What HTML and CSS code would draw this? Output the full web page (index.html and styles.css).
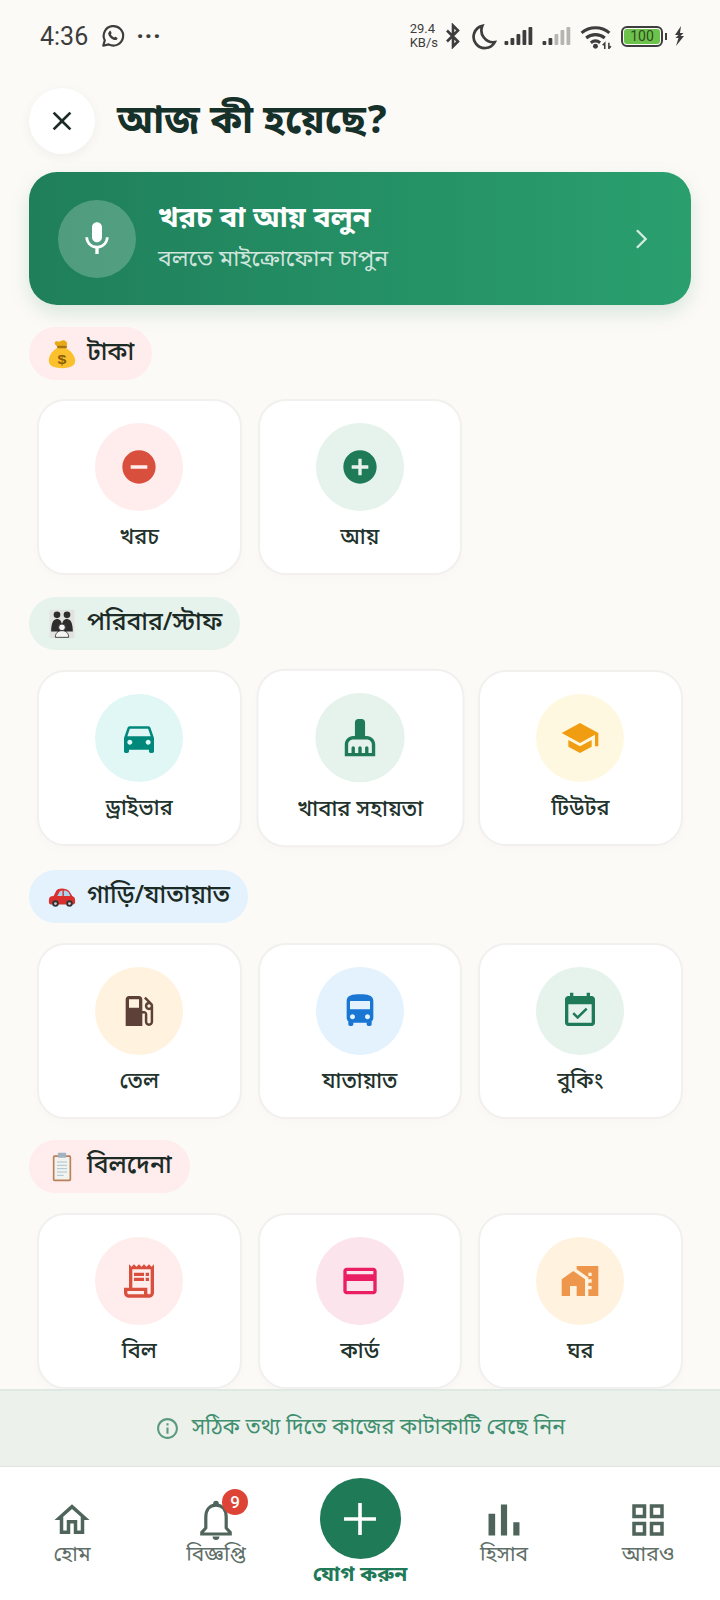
FILE: index.html
```html
<!DOCTYPE html>
<html lang="bn">
  <head>
    <meta charset="utf-8">
    <title>আজ কী হয়েছে?</title>
    <link rel="stylesheet" href="styles.css">
  </head>
  <body>
    <div class="screen">
      <div class="status-bar">
        <div class="status-left">
          <span class="clock">4:36</span>
          <svg class="wa-icon" viewBox="0 0 24 24"><path d="M3 21l1.4-5A9 9 0 1 1 8 19.7z" fill="none" stroke="#3d3d3d" stroke-width="2" stroke-linejoin="round"/><path d="M8.6 7.4c.5-.5 1.2-.4 1.4.2l.6 1.4c.1.4 0 .7-.6 1.4.6 1.3 1.6 2.300 3 3 .6-.7.9-.9 1.300-.7l1.500.8c.5.3.5.9.1 1.400-.8.9-2 1.100-3.500.5-2.400-1-4-2.700-4.700-4.800-.3-1.100 0-2 .9-2.600z" fill="#3d3d3d"/></svg>
          <span class="dots">···</span>
        </div>
        <div class="status-right">
          <span class="netspeed">29.4<br>KB/s</span>
          <svg class="bt-icon" viewBox="0 0 16 26"><path d="M2 7.500L13 18.500 8 23.500V2.500L13 7.500 2 18.500" fill="none" stroke="#3d3d3d" stroke-width="2.600"/></svg>
          <svg class="moon-icon" viewBox="0 0 24 24"><path d="M11 2.500A10 10 0 1 0 22 17 10.500 10.500 0 0 1 11 2.500z" fill="none" stroke="#3d3d3d" stroke-width="2.400"/></svg>
          <svg class="signal-icon" viewBox="0 0 30 20"><g fill="#3d3d3d"><rect x="0" y="15" width="3.800" height="4" rx="1"/><rect x="6" y="12" width="3.800" height="7" rx="1"/><rect x="12" y="8" width="3.800" height="11" rx="1"/><rect x="18" y="4" width="3.800" height="15" rx="1"/><rect x="24" y="1" width="3.800" height="18" rx="1"/></g></svg>
          <svg class="signal-icon" viewBox="0 0 30 20"><g fill="#3d3d3d"><rect x="0" y="15" width="3.800" height="4" rx="1"/><rect x="6" y="12" width="3.800" height="7" rx="1"/></g><g fill="#b5b5b2"><rect x="12" y="8" width="3.800" height="11" rx="1"/><rect x="18" y="4" width="3.800" height="15" rx="1"/><rect x="24" y="1" width="3.800" height="18" rx="1"/></g></svg>
          <svg class="wifi-icon" viewBox="0 0 32 24"><g fill="none" stroke="#3d3d3d" stroke-width="3"><path d="M1.500 8.500a21 21 0 0 1 27 0"/><path d="M6 13.500a14 14 0 0 1 18 0"/><path d="M10.500 18a7.500 7.500 0 0 1 9 0"/></g><circle cx="15" cy="21.500" r="2.400" fill="#3d3d3d"/><path d="M24 24v-5.500l-2 2M28 18v5.500l2-2" fill="none" stroke="#3d3d3d" stroke-width="1.500"/></svg>
          <div class="battery"><span class="battery-fill">100</span></div>
          <span class="battery-tip"></span>
          <svg class="bolt-icon" viewBox="0 0 12 22"><path d="M8 1L2 10l3.500 0-3 3 3 0L3 21l8-10-3.500 0 3-3-3.500 0z" fill="#3d3d3d"/></svg>
        </div>
      </div>

      <div class="scroll-area">
        <div class="top-row">
          <div class="close-btn">
            <svg viewBox="0 0 24 24"><path d="M19 6.410L17.590 5 12 10.590 6.410 5 5 6.410 10.590 12 5 17.590 6.410 19 12 13.410 17.590 19 19 17.590 13.410 12z"/></svg>
          </div>
          <h1 class="page-title">আজ কী হয়েছে?</h1>
        </div>

        <div class="voice-banner">
          <div class="mic-circle">
            <svg viewBox="0 0 24 24"><path d="M12 14c1.660 0 2.990-1.340 2.990-3L15 5c0-1.660-1.340-3-3-3S9 3.340 9 5v6c0 1.660 1.340 3 3 3zm5.300-3c0 3-2.540 5.100-5.300 5.100S6.700 14 6.700 11H5c0 3.410 2.720 6.230 6 6.720V21h2v-3.280c3.280-.48 6-3.300 6-6.720h-1.700z"/></svg>
          </div>
          <div class="voice-text">
            <div class="voice-title">খরচ বা আয় বলুন</div>
            <div class="voice-sub">বলতে মাইক্রোফোন চাপুন</div>
          </div>
          <svg class="voice-chevron" viewBox="0 0 24 24"><path d="M8.500 4.500L16 12l-7.500 7.500"/></svg>
        </div>

        <section class="group group-first">
          <div class="pill pill-rose">
            <svg class="emoji" viewBox="2 0 28 36" preserveAspectRatio="none"><path d="M11 9C7 5 9 2 12 3c2 1 4-3 7-1s2 4 2 6z" fill="#e8a917"/><path d="M12 10C5 15 2 22 3 28c1 5 6 7 13 7s12-2 13-7c1-6-3-13-10-18z" fill="#fbc02d"/><rect x="11" y="8" width="10" height="3" rx="1.500" fill="#a8740f"/><text x="16" y="30" class="emoji-dollar">$</text></svg>
            <span>টাকা</span>
          </div>
          <div class="card-row">
            <div class="card">
              <div class="icon-circle bg-rose"><svg class="ic-red" viewBox="0 0 24 24"><path d="M12 2C6.480 2 2 6.480 2 12s4.480 10 10 10 10-4.480 10-10S17.520 2 12 2zm5 11H7v-2h10v2z"/></svg></div>
              <div class="card-label">খরচ</div>
            </div>
            <div class="card">
              <div class="icon-circle bg-mint"><svg class="ic-green" viewBox="0 0 24 24"><path d="M12 2C6.480 2 2 6.480 2 12s4.480 10 10 10 10-4.480 10-10S17.520 2 12 2zm5 11h-4v4h-2v-4H7v-2h4V7h2v4h4v2z"/></svg></div>
              <div class="card-label">আয়</div>
            </div>
          </div>
        </section>

        <section class="group group-tall">
          <div class="pill pill-mint">
            <svg class="emoji" viewBox="0 0 32 36"><rect x="1" y="1" width="30" height="34" rx="2" fill="#e2e2e0"/><circle cx="10" cy="7" r="4" fill="#2d2d2d"/><circle cx="22" cy="7" r="4" fill="#2d2d2d"/><path d="M3 27c0-11 3-15 7-15s5 3 6 6c1-3 2-6 6-6s7 4 7 15z" fill="#2d2d2d"/><circle cx="16" cy="22" r="4" fill="#f4f4f4" stroke="#2d2d2d"/><path d="M8 34c0-5 3-8 8-8s8 3 8 8z" fill="#f4f4f4" stroke="#2d2d2d"/></svg>
            <span>পরিবার/স্টাফ</span>
          </div>
          <div class="card-row">
            <div class="card">
              <div class="icon-circle bg-teal"><svg class="ic-teal" viewBox="0 0 24 24"><path d="M18.920 6.010C18.720 5.420 18.160 5 17.500 5h-11c-.66 0-1.210.42-1.420 1.010L3 12v8c0 .55.45 1 1 1h1c.55 0 1-.45 1-1v-1h12v1c0 .55.45 1 1 1h1c.55 0 1-.45 1-1v-8l-2.080-5.990zM6.500 16c-.83 0-1.500-.67-1.500-1.500S5.670 13 6.500 13s1.500.67 1.500 1.500S7.330 16 6.500 16zm11 0c-.83 0-1.500-.67-1.500-1.500s.67-1.500 1.500-1.500 1.500.67 1.500 1.500-.67 1.500-1.500 1.500zM5 11l1.500-4.500h11L19 11H5z"/></svg></div>
              <div class="card-label">ড্রাইভার</div>
            </div>
            <div class="card card-raised">
              <div class="icon-circle bg-mint"><svg class="ic-green" viewBox="0 0 24 24"><path d="M16 11h-1V3c0-1.100-.9-2-2-2h-2c-1.100 0-2 .9-2 2v8H8c-2.760 0-5 2.240-5 5v7h18v-7c0-2.760-2.240-5-5-5zm3 10h-2v-3c0-.55-.45-1-1-1s-1 .45-1 1v3h-2v-3c0-.55-.45-1-1-1s-1 .45-1 1v3H9v-3c0-.55-.45-1-1-1s-1 .45-1 1v3H5v-5c0-1.650 1.350-3 3-3h8c1.650 0 3 1.350 3 3v5z"/></svg></div>
              <div class="card-label">খাবার সহায়তা</div>
            </div>
            <div class="card">
              <div class="icon-circle bg-cream"><svg class="ic-amber" viewBox="0 0 24 24"><path d="M5 13.180v4L12 21l7-3.820v-4L12 17l-7-3.820zM12 3L1 9l11 6 9-4.910V17h2V9L12 3z"/></svg></div>
              <div class="card-label">টিউটর</div>
            </div>
          </div>
        </section>

        <section class="group">
          <div class="pill pill-blue">
            <svg class="emoji" viewBox="1 0 30 24"><path d="M2 15c0-3 2-4 5-4l3-6c1-1 3-2 6-2s6 1 8 3l3 5c2 1 3 2 3 4v3c0 1-1 2-2 2H4c-1 0-2-1-2-2z" fill="#d9302e"/><path d="M11 11l2.500-5c1-.8 2-1 3-1v6zM18 5c2 0 4 .5 5 2l2 4h-7z" fill="#a9d4ee"/><circle cx="9" cy="19" r="3.500" fill="#333"/><circle cx="24" cy="19" r="3.500" fill="#333"/><circle cx="9" cy="19" r="1.500" fill="#ccc"/><circle cx="24" cy="19" r="1.500" fill="#ccc"/></svg>
            <span>গাড়ি/যাতায়াত</span>
          </div>
          <div class="card-row">
            <div class="card">
              <div class="icon-circle bg-peach"><svg class="ic-brown" viewBox="0 0 24 24"><path d="M19.770 7.230l.01-.01-3.720-3.720L15 4.560l2.110 2.110c-.94.36-1.610 1.260-1.610 2.330 0 1.380 1.120 2.500 2.500 2.500.36 0 .69-.08 1-.21v7.210c0 .55-.45 1-1 1s-1-.45-1-1V14c0-1.100-.9-2-2-2h-1V5c0-1.100-.9-2-2-2H6c-1.100 0-2 .9-2 2v16h10v-7.500h1.500v5c0 1.380 1.120 2.500 2.500 2.500s2.500-1.120 2.500-2.500V9c0-.69-.28-1.320-.73-1.770zM12 10H6V5h6v5zm6 0c-.55 0-1-.45-1-1s.45-1 1-1 1 .45 1 1-.45 1-1 1z"/></svg></div>
              <div class="card-label">তেল</div>
            </div>
            <div class="card">
              <div class="icon-circle bg-sky"><svg class="ic-blue" viewBox="0 0 24 24"><path d="M4 16c0 .88.39 1.670 1 2.220V20c0 .55.45 1 1 1h1c.55 0 1-.45 1-1v-1h8v1c0 .55.45 1 1 1h1c.55 0 1-.45 1-1v-1.780c.61-.55 1-1.340 1-2.220V6c0-3.500-3.580-4-8-4s-8 .5-8 4v10zm3.500 1c-.83 0-1.500-.67-1.500-1.500S6.670 14 7.500 14s1.500.67 1.500 1.500S8.330 17 7.500 17zm9 0c-.83 0-1.500-.67-1.500-1.500s.67-1.500 1.500-1.500 1.500.67 1.500 1.500-.67 1.500-1.500 1.500zm1.500-6H6V6h12v5z"/></svg></div>
              <div class="card-label">যাতায়াত</div>
            </div>
            <div class="card">
              <div class="icon-circle bg-mint"><svg class="ic-green" viewBox="0 0 24 24"><path d="M16.530 11.060L15.470 10l-4.880 4.880-2.120-2.120-1.060 1.060L10.590 17l5.940-5.940zM19 3h-1V1h-2v2H8V1H6v2H5c-1.110 0-1.990.9-1.990 2L3 19c0 1.100.89 2 2 2h14c1.100 0 2-.9 2-2V5c0-1.100-.9-2-2-2zm0 16H5V8h14v11z"/></svg></div>
              <div class="card-label">বুকিং</div>
            </div>
          </div>
        </section>

        <section class="group">
          <div class="pill pill-rose">
            <svg class="emoji" viewBox="0 0 32 36"><rect x="5" y="4" width="22" height="31" rx="2" fill="#b9815a"/><rect x="7" y="6" width="18" height="27" fill="#f2f2ee"/><rect x="11" y="1" width="10" height="6" rx="1" fill="#9fb4c0"/><path d="M10 12h12M10 16h12M10 20h12M10 24h12M10 28h8" stroke="#a9c3d2" stroke-width="1.200"/></svg>
            <span>বিলদেনা</span>
          </div>
          <div class="card-row">
            <div class="card">
              <div class="icon-circle bg-rose"><svg class="ic-red" viewBox="0 0 24 24"><path fill-rule="evenodd" d="M19.500 3.500L18 2l-1.500 1.500L15 2l-1.500 1.500L12 2l-1.500 1.500L9 2 7.500 3.500 6 2v14H3v3c0 1.660 1.340 3 3 3h12c1.660 0 3-1.340 3-3V2l-1.500 1.500zM15 20H6c-.55 0-1-.45-1-1v-1h10v2zm4-1c0 .55-.45 1-1 1s-1-.45-1-1v-3H8V5h11v14z"/><path d="M9 7h6v2H9zm7 0h2v2h-2zM9 10h6v2H9zm7 0h2v2h-2z"/></svg></div>
              <div class="card-label">বিল</div>
            </div>
            <div class="card">
              <div class="icon-circle bg-pink"><svg class="ic-pink" viewBox="0 0 24 24"><path d="M20 4H4c-1.110 0-1.990.89-1.990 2L2 18c0 1.110.89 2 2 2h16c1.110 0 2-.89 2-2V6c0-1.110-.89-2-2-2zm0 14H4v-6h16v6zm0-10H4V6h16v2z"/></svg></div>
              <div class="card-label">কার্ড</div>
            </div>
            <div class="card">
              <div class="icon-circle bg-peach"><svg class="ic-orange" viewBox="0 0 24 24"><path d="M1 11v10h5v-6h4v6h5V11L8 6z"/><path d="M10 3v1.970l7 5V11h2v2h-2v2h2v2h-2v4h6V3H10zm9 6h-2V7h2v2z"/></svg></div>
              <div class="card-label">ঘর</div>
            </div>
          </div>
        </section>
      </div>

      <div class="hint-strip">
        <svg viewBox="0 0 24 24"><path d="M11 7h2v2h-2zm0 4h2v6h-2zm1-9C6.480 2 2 6.480 2 12s4.480 10 10 10 10-4.480 10-10S17.520 2 12 2zm0 18c-4.410 0-8-3.590-8-8s3.590-8 8-8 8 3.590 8 8-3.590 8-8 8z"/></svg>
        <span>সঠিক তথ্য দিতে কাজের কাটাকাটি বেছে নিন</span>
      </div>

      <nav class="bottom-nav">
        <div class="nav-item">
          <svg viewBox="0 0 24 24"><path d="M12 5.690l5 4.500V18h-2v-6H9v6H7v-7.810l5-4.500M12 3L2 12h3v8h6v-6h2v6h6v-8h3L12 3z"/></svg>
          <span>হোম</span>
        </div>
        <div class="nav-item">
          <div class="bell-wrap">
            <svg viewBox="1.500 1.500 21 21"><path d="M12 4.600c-3.500 0-5.100 2.800-5.100 6V16l-2 2.200v.8h14.200v-.8l-2-2.200v-5.400c0-3.200-1.600-6-5.100-6z" fill="none" stroke="#4f645b" stroke-width="1.600"/><path d="M10.600 5V3.800a1.400 1.400 0 0 1 2.800 0V5zM10.300 20.300h3.400a1.700 1.700 0 0 1-3.400 0z"/></svg>
            <span class="badge">9</span>
          </div>
          <span>বিজ্ঞপ্তি</span>
        </div>
        <div class="nav-item nav-add">
          <div class="add-btn">
            <svg viewBox="0 0 24 24"><path d="M11.100 4h1.800v7.100H20v1.800h-7.100V20h-1.800v-7.100H4v-1.800h7.100z"/></svg>
          </div>
          <span>যোগ করুন</span>
        </div>
        <div class="nav-item">
          <svg viewBox="2.500 2.500 19 19"><path d="M5 9.200h3V19H5zM10.600 5h2.800v14h-2.800zm5.600 8H19v6h-2.800z"/></svg>
          <span>হিসাব</span>
        </div>
        <div class="nav-item">
          <svg viewBox="0 0 24 24"><path d="M3 3v8h8V3H3zm6 6H5V5h4v4zm-6 4v8h8v-8H3zm6 6H5v-4h4v4zm4-16v8h8V3h-8zm6 6h-4V5h4v4zm-6 4v8h8v-8h-8zm6 6h-4v-4h4v4z"/></svg>
          <span>আরও</span>
        </div>
      </nav>
    </div>
  </body>
</html>
```

FILE: styles.css
```css
* {
  box-sizing: border-box;
}

body {
  margin: 0;
  background: #fcfaf7;
  font-family: "Noto Sans Bengali", "Noto Sans", "Liberation Sans", sans-serif;
  color: #1c2b26;
}

.screen {
  width: 720px;
  height: 1600px;
  display: flex;
  flex-direction: column;
  overflow: hidden;
}

/* status bar */
.status-bar {
  height: 72px;
  flex: none;
  display: flex;
  justify-content: space-between;
  align-items: center;
  padding: 0 35px 0 40px;
  color: #3d3d3d;
}

.status-left,
.status-right {
  display: flex;
  align-items: center;
}

.clock {
  font-family: "Roboto", sans-serif;
  font-size: 25px;
}

.wa-icon {
  width: 26px;
  height: 26px;
  margin-left: 12px;
}

.dots {
  font-family: "Roboto", sans-serif;
  font-size: 26px;
  font-weight: 700;
  letter-spacing: 0.5px;
  margin-left: 10px;
}

.netspeed {
  font-family: "Roboto", sans-serif;
  font-size: 13px;
  line-height: 14px;
}

.bt-icon {
  width: 18px;
  height: 26px;
  margin-left: 6px;
}

.moon-icon {
  width: 27px;
  height: 27px;
  margin-left: 8px;
}

.signal-icon {
  width: 31px;
  height: 20px;
  margin-left: 7px;
}

.wifi-icon {
  width: 33px;
  height: 25px;
  margin-left: 7px;
}

.battery {
  width: 42px;
  height: 21px;
  margin-left: 8px;
  border: 2px solid #3d3d3d;
  border-radius: 6px;
  padding: 1px;
}

.battery-fill {
  display: block;
  height: 100%;
  background: #6cc24a;
  border-radius: 3px;
  font-family: "Roboto", sans-serif;
  font-size: 14px;
  line-height: 15px;
  text-align: center;
  color: #2f4a22;
}

.battery-tip {
  width: 2px;
  height: 7px;
  margin-left: 2px;
  background: #3d3d3d;
}

.bolt-icon {
  width: 12px;
  height: 22px;
  margin-left: 6px;
}

/* main scroll part */
.scroll-area {
  flex: 1;
  min-height: 0;
  overflow: hidden;
}

.top-row {
  display: flex;
  align-items: center;
  padding: 16px 29px 0;
}

.close-btn {
  width: 66px;
  height: 66px;
  border-radius: 50%;
  background: #fff;
  box-shadow: 0 3px 12px rgba(0, 0, 0, 0.05);
  display: flex;
  align-items: center;
  justify-content: center;
}

.close-btn svg {
  width: 32px;
  height: 32px;
  fill: #1c2b26;
}

.page-title {
  margin: 4px 0 0 22px;
  font-size: 39.3px;
  line-height: 62px;
  font-weight: 700;
  color: #16302a;
}

.voice-banner {
  height: 133px;
  margin: 18px 29px 22px;
  padding: 0 36px 0 29px;
  border-radius: 28px;
  background: linear-gradient(90deg, #1f7f5b, #2a9f6e);
  box-shadow: 0 8px 20px rgba(31, 122, 88, 0.16);
  display: flex;
  align-items: center;
  color: #fff;
}

.mic-circle {
  width: 78px;
  height: 78px;
  border-radius: 50%;
  background: rgba(255, 255, 255, 0.22);
  display: flex;
  align-items: center;
  justify-content: center;
}

.mic-circle svg {
  width: 40px;
  height: 40px;
  fill: #fff;
}

.voice-text {
  flex: 1;
  margin-left: 22px;
  padding-top: 3px;
}

.voice-title {
  font-size: 29px;
  font-weight: 700;
  line-height: 40px;
}

.voice-sub {
  font-size: 23px;
  line-height: 40px;
  color: rgba(255, 255, 255, 0.78);
}

.voice-chevron {
  width: 28px;
  height: 28px;
  fill: none;
  stroke: rgba(255, 255, 255, 0.8);
  stroke-width: 2;
}

/* groups */
.group {
  margin-bottom: 21px;
}

.group-tall {
  margin-bottom: 24px;
}

.group-first {
  margin-bottom: 22px;
}

.group-first .card-row {
  padding-top: 19px;
}

.pill {
  display: inline-flex;
  align-items: center;
  height: 53px;
  margin-left: 29px;
  padding: 0 18px 0 19px;
  border-radius: 27px;
  font-size: 24.8px;
  font-weight: 500;
  vertical-align: top;
}

.pill-rose {
  background: #ffecec;
}

.pill-mint {
  background: #e6f3ed;
}

.pill-blue {
  background: #e3f2fd;
}

.emoji {
  width: 28px;
  height: 30px;
  margin-right: 11px;
  flex: none;
}

.emoji-dollar {
  font-family: "Liberation Sans", sans-serif;
  font-size: 16px;
  font-weight: 700;
  text-anchor: middle;
  fill: #8a5c05;
}

.card-row {
  display: grid;
  grid-template-columns: repeat(3, 204.500px);
  gap: 16px;
  padding: 20px 37px 0;
}

.card {
  height: 176px;
  padding-top: 22px;
  background: #fff;
  border: 2px solid #f1f0ee;
  border-radius: 28px;
  box-shadow: 0 4px 10px rgba(0, 0, 0, 0.015);
  display: flex;
  flex-direction: column;
  align-items: center;
}

.card-raised {
  transform: scale(1.015);
}

.icon-circle {
  width: 88px;
  height: 88px;
  border-radius: 50%;
  display: flex;
  align-items: center;
  justify-content: center;
}

.icon-circle svg {
  width: 40px;
  height: 40px;
}

.bg-rose { background: #ffecec; }
.bg-mint { background: #e6f3ed; }
.bg-teal { background: #e0f7f5; }
.bg-cream { background: #fff8e1; }
.bg-peach { background: #fff3e0; }
.bg-sky { background: #e3f2fd; }
.bg-pink { background: #fce4ec; }

.ic-red { fill: #d94f3d; }
.ic-green { fill: #1f7a58; }
.ic-teal { fill: #00897b; }
.ic-amber { fill: #f09d12; }
.ic-brown { fill: #5d4037; }
.ic-blue { fill: #1976d2; }
.ic-pink { fill: #e91e63; }
.ic-orange { fill: #ee964b; }

.card-label {
  margin-top: 13px;
  font-size: 21.7px;
  font-weight: 500;
  line-height: 30px;
  color: #22322c;
}

/* bottom */
.hint-strip {
  height: 78px;
  flex: none;
  background: #ecf1ec;
  border-top: 2px solid #dfe9e3;
  border-bottom: 1px solid #e2e6e2;
  display: flex;
  align-items: center;
  justify-content: center;
  color: #3f8f6f;
  font-size: 21.5px;
}

.hint-strip svg {
  width: 25px;
  height: 25px;
  margin-right: 12px;
  fill: #5a9a80;
}

.bottom-nav {
  height: 133px;
  flex: none;
  background: #fff;
  display: flex;
  justify-content: space-between;
  padding: 0 17px 0 17px;
}

.nav-item {
  width: 110px;
  display: flex;
  flex-direction: column;
  align-items: center;
  padding-top: 32px;
  color: #5f6f68;
  font-size: 21px;
  line-height: 30px;
}

.nav-item svg {
  width: 42px;
  height: 42px;
  fill: #4f645b;
}

.bell-wrap {
  position: relative;
  height: 42px;
}

.badge {
  position: absolute;
  top: -10px;
  right: -11px;
  width: 26px;
  height: 26px;
  border-radius: 50%;
  background: #dd4436;
  color: #fff;
  font-family: "Roboto", sans-serif;
  font-size: 17px;
  font-weight: 500;
  line-height: 26px;
  text-align: center;
}

.nav-add {
  padding-top: 11px;
  color: #1f7a58;
  font-weight: 700;
  gap: 2px;
}

.add-btn {
  width: 81px;
  height: 81px;
  border-radius: 50%;
  background: #1f7a58;
  display: flex;
  align-items: center;
  justify-content: center;
}

.add-btn svg {
  width: 48px;
  height: 48px;
  fill: #fff;
}
```
